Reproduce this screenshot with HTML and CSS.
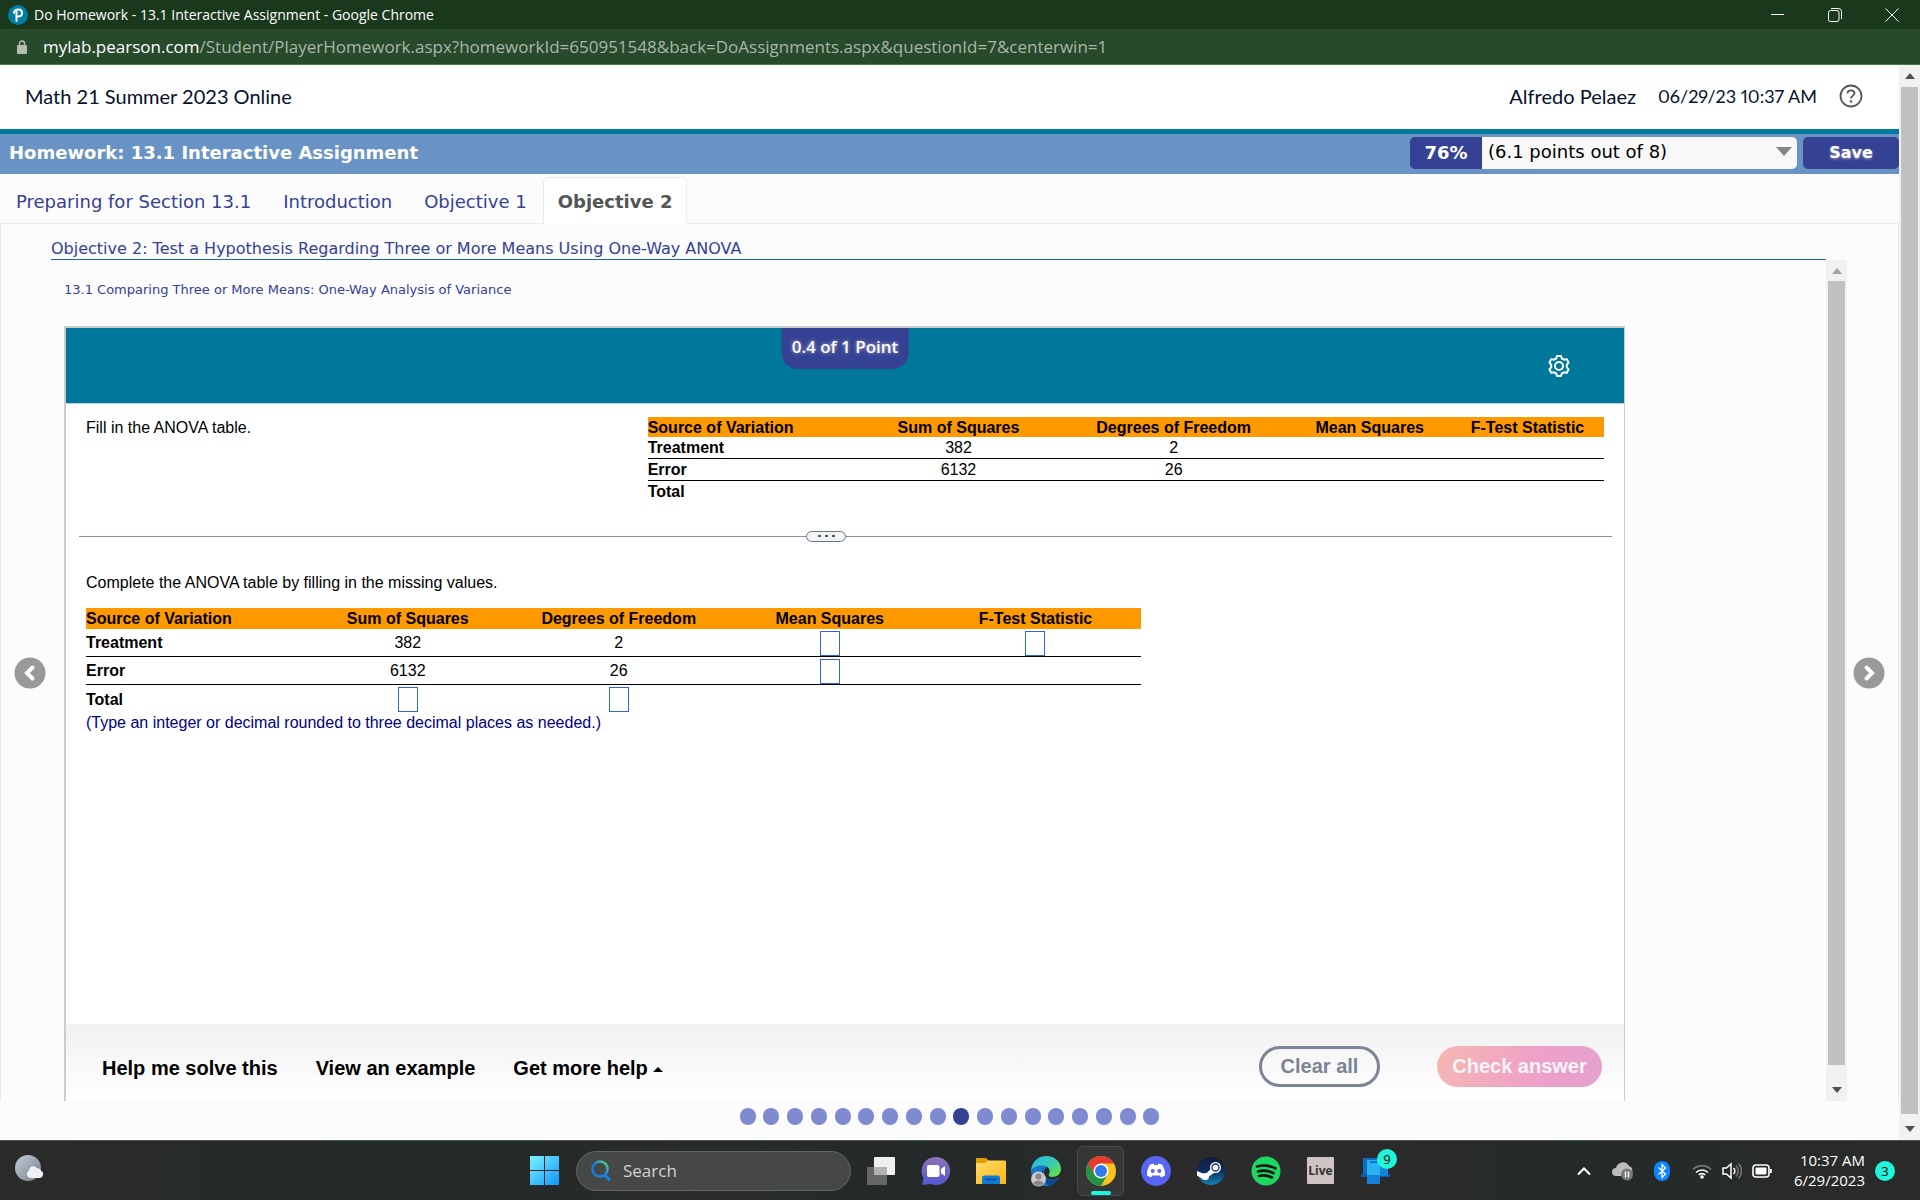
FILE: index.html
```html
<!DOCTYPE html>
<html lang="en">
  <head>
    <meta charset="UTF-8" />
    <title>Do Homework - 13.1 Interactive Assignment</title>
    <link rel="stylesheet" href="styles.css">
  </head>
  <body>
    <!-- window chrome -->
    <div class="titlebar">
      <svg class="favicon" width="20" height="20" viewBox="0 0 20 20">
        <circle cx="10" cy="10" r="10" fill="#007fa3" />
        <path d="M8.500 16V5.500M6 8c0-2.500 2-3.500 4.500-3.500S14 6 14 8s-1.500 3.500-4 3.500" fill="none" stroke="#fff" stroke-width="2" stroke-linecap="round" />
      </svg>
      <span class="window-title">Do Homework - 13.1 Interactive Assignment - Google Chrome</span>
      <button class="window-button" aria-label="Minimize">
        <svg width="14" height="14" viewBox="0 0 14 14"><path d="M0 6.500h13" /></svg>
      </button>
      <button class="window-button" aria-label="Restore">
        <svg width="14" height="14" viewBox="0 0 14 14"><rect x="0.500" y="2.500" width="10.500" height="11" rx="2" /><path d="M3 .5h7.500a3 3 0 0 1 3 3V11" /></svg>
      </button>
      <button class="window-button" aria-label="Close">
        <svg width="14" height="14" viewBox="0 0 14 14"><path d="M.5.5l13 13M13.500.5l-13 13" /></svg>
      </button>
    </div>
    <div class="urlbar">
      <svg width="12" height="14" viewBox="0 0 12 14">
        <rect x="1" y="5" width="10" height="9" rx="1" fill="#b4bcb4" />
        <path d="M3.500 5.500V3.500a2.500 2.500 0 0 1 5 0v2" fill="none" stroke="#b4bcb4" stroke-width="1.500" />
      </svg>
      <span class="url"><span class="host">mylab.pearson.com</span>/Student/PlayerHomework.aspx?homeworkId=650951548&amp;back=DoAssignments.aspx&amp;questionId=7&amp;centerwin=1</span>
    </div>

    <div class="viewport">
      <div class="page">
        <header class="header">
          <div class="course">Math 21 Summer 2023 Online</div>
          <div class="user">Alfredo Pelaez</div>
          <div class="date">06/29/23 10:37 AM</div>
          <button class="help-button" aria-label="Help">
            <svg width="24" height="24" viewBox="0 0 24 24" fill="none" stroke="#555" stroke-width="1.800">
              <circle cx="12" cy="12" r="10.500" />
              <path d="M8.500 9.500C8.500 7.500 10 6.300 12 6.300s3.500 1.200 3.500 3c0 2.200-3.500 2.500-3.500 5.200" />
              <circle cx="12" cy="17.500" r="1.200" fill="#555" stroke="none" />
            </svg>
          </button>
        </header>

        <div class="homework-bar">
          <h1>Homework: 13.1 Interactive Assignment</h1>
          <div class="score">
            <span class="percent">76%</span>
            <select aria-label="Score">
              <option>(6.1 points out of 8)</option>
            </select>
            <svg class="caret" width="16" height="9" viewBox="0 0 16 9"><path d="M0 0h16L8 9z" fill="#858585" /></svg>
          </div>
          <button class="save-button">Save</button>
        </div>

        <nav class="tabs">
          <a href="#">Preparing for Section 13.1</a>
          <a href="#">Introduction</a>
          <a href="#">Objective 1</a>
          <a href="#" class="active">Objective 2</a>
        </nav>

        <main class="player">
          <div class="side prev">
            <button class="arrow" aria-label="Previous question">
              <svg width="32" height="32" viewBox="0 0 32 32"><circle cx="16" cy="16" r="15.500" fill="#999" /><path d="M18.500 10.500L13 16l5.500 5.500" /></svg>
            </button>
          </div>

          <div class="pane">
            <h2>Objective 2: Test a Hypothesis Regarding Three or More Means Using One-Way ANOVA</h2>
            <div class="pane-body">
              <div class="pane-content">
                <a class="section-link" href="#">13.1 Comparing Three or More Means: One-Way Analysis of Variance</a>

                <div class="card">
                  <div class="card-top">
                    <span class="points">0.4 of 1 Point</span>
                    <button class="gear" aria-label="Settings">
                      <svg width="24" height="24" viewBox="0 0 24 24" fill="none" stroke="#fff" stroke-width="2">
                        <path d="M10 2h4l.8 2.500 2.200 1.200 2.600-.6 2 3.500-1.800 2v2.800l1.800 2-2 3.500-2.600-.6-2.200 1.200L14 22h-4l-.8-2.500L7 18.300l-2.600.6-2-3.500 1.800-2v-2.800l-1.800-2 2-3.500 2.600.6 2.200-1.200z" stroke-linejoin="round" />
                        <circle cx="12" cy="12" r="4" />
                      </svg>
                    </button>
                  </div>

                  <section class="question">
                    <p>Fill in the ANOVA table.</p>
                    <table class="anova given">
                      <colgroup>
                        <col class="g1"><col class="g2"><col class="g3"><col class="g4"><col class="g5">
                      </colgroup>
                      <thead>
                        <tr><th>Source of Variation</th><th>Sum of Squares</th><th>Degrees of Freedom</th><th>Mean Squares</th><th>F-Test Statistic</th></tr>
                      </thead>
                      <tbody>
                        <tr><th>Treatment</th><td>382</td><td>2</td><td></td><td></td></tr>
                        <tr><th>Error</th><td>6132</td><td>26</td><td></td><td></td></tr>
                        <tr><th>Total</th><td></td><td></td><td></td><td></td></tr>
                      </tbody>
                    </table>
                  </section>

                  <div class="divider">
                    <button class="grip" aria-label="Resize"><i></i><i></i><i></i></button>
                  </div>

                  <section class="answer">
                    <p>Complete the ANOVA table by filling in the missing values.</p>
                    <table class="anova fill">
                      <colgroup>
                        <col class="f1"><col class="f2"><col class="f3"><col class="f4"><col class="f5">
                      </colgroup>
                      <thead>
                        <tr><th>Source of Variation</th><th>Sum of Squares</th><th>Degrees of Freedom</th><th>Mean Squares</th><th>F-Test Statistic</th></tr>
                      </thead>
                      <tbody>
                        <tr><th>Treatment</th><td>382</td><td>2</td><td><input type="text" aria-label="Treatment mean squares"></td><td><input type="text" aria-label="F-test statistic"></td></tr>
                        <tr><th>Error</th><td>6132</td><td>26</td><td><input type="text" aria-label="Error mean squares"></td><td></td></tr>
                        <tr><th>Total</th><td><input type="text" aria-label="Total sum of squares"></td><td><input type="text" aria-label="Total degrees of freedom"></td><td></td><td></td></tr>
                      </tbody>
                    </table>
                    <p class="hint">(Type an integer or decimal rounded to three decimal places as needed.)</p>
                  </section>

                  <footer class="card-footer">
                    <button class="text-button">Help me solve this</button>
                    <button class="text-button">View an example</button>
                    <button class="text-button">Get more help <svg width="10" height="5" viewBox="0 0 10 5"><path d="M0 5h10L5 0z" /></svg></button>
                    <button class="clear-button">Clear all</button>
                    <button class="check-button">Check answer</button>
                  </footer>
                </div>
              </div>

              <div class="scrollbar inner">
                <svg width="10" height="6" viewBox="0 0 10 6"><path d="M0 6h10L5 0z" fill="#a3a3a3" /></svg>
                <span class="thumb"></span>
                <svg width="10" height="6" viewBox="0 0 10 6"><path d="M0 0h10L5 6z" fill="#505050" /></svg>
              </div>
            </div>
          </div>

          <div class="side next">
            <button class="arrow" aria-label="Next question">
              <svg width="32" height="32" viewBox="0 0 32 32"><circle cx="16" cy="16" r="15.500" fill="#999" /><path d="M13.500 10.500L19 16l-5.500 5.500" /></svg>
            </button>
          </div>
        </main>

        <div class="dots">
          <i></i><i></i><i></i><i></i><i></i><i></i><i></i><i></i><i></i><i class="current"></i><i></i><i></i><i></i><i></i><i></i><i></i><i></i><i></i>
        </div>
      </div>

      <div class="scrollbar">
        <svg width="10" height="6" viewBox="0 0 10 6"><path d="M0 6h10L5 0z" fill="#505050" /></svg>
        <span class="thumb"></span>
        <svg width="10" height="6" viewBox="0 0 10 6"><path d="M0 0h10L5 6z" fill="#505050" /></svg>
      </div>
    </div>

    <!-- Windows taskbar -->
    <div class="taskbar">
      <div class="weather">
        <svg width="30" height="28" viewBox="0 0 30 28">
          <defs>
            <linearGradient id="moon" x1="0" y1="0" x2="1" y2="1"><stop offset="0" stop-color="#c3ccd6" /><stop offset="1" stop-color="#75808c" /></linearGradient>
          </defs>
          <circle cx="13" cy="14" r="13" fill="url(#moon)" />
          <path d="M15 24a4 4 0 0 1-1-7.500 4.500 4.500 0 0 1 8-2.500 4.500 4.500 0 0 1 4 2.500 4 4 0 0 1-1 7.500z" fill="#eef0f3" />
        </svg>
      </div>

      <div class="apps">
        <button class="app start" aria-label="Start">
          <svg width="30" height="30" viewBox="0 0 30 30">
            <defs><linearGradient id="win" gradientUnits="userSpaceOnUse" x1="0" y1="0" x2="30" y2="30"><stop offset="0" stop-color="#7df3ff" /><stop offset="1" stop-color="#0a93fb" /></linearGradient></defs>
            <path d="M0 0h14v14H0zM15 0h14v14H15zM0 15h14v14H0zM15 15h14v14H15z" fill="url(#win)" />
          </svg>
        </button>
        <label class="search">
          <svg width="20" height="22" viewBox="0 0 20 22" fill="none">
            <defs><linearGradient id="lens" x1="0" y1="1" x2="1" y2="0"><stop offset=".5" stop-color="#1480dc" /><stop offset="1" stop-color="#5de07c" /></linearGradient></defs>
            <circle cx="9" cy="9" r="7.500" stroke="url(#lens)" stroke-width="2.500" />
            <path d="M14 15l4 4.500" stroke="#1480dc" stroke-width="3.200" stroke-linecap="round" />
          </svg>
          <input type="text" placeholder="Search" aria-label="Search">
        </label>

        <button class="app" aria-label="Task view">
          <svg width="30" height="30" viewBox="0 0 30 30">
            <rect x="1" y="11" width="20" height="18" rx="1" fill="#666" />
            <rect x="8" y="1" width="21" height="18" rx="1" fill="#f0f0f0" />
            <path d="M8 11h13v8H8z" fill="#b3b3b3" />
          </svg>
        </button>
        <button class="app" aria-label="Chat">
          <svg width="30" height="30" viewBox="0 0 30 30">
            <defs><linearGradient id="chat" x1="0" y1="0" x2="0" y2="1"><stop offset="0" stop-color="#8a72b8" /><stop offset="1" stop-color="#5558cf" /></linearGradient></defs>
            <path d="M15 1a14 14 0 1 1-5 27l-9 1 1.500-7A14 14 0 0 1 15 1z" fill="url(#chat)" />
            <rect x="6" y="9" width="12.500" height="12" rx="2" fill="#fff" />
            <path d="M20 13l4-3v10l-4-3z" fill="#fff" />
          </svg>
        </button>
        <button class="app" aria-label="File Explorer">
          <svg width="32" height="30" viewBox="0 0 32 30">
            <defs><linearGradient id="folder" x1="0" y1="0" x2="1" y2="1"><stop offset="0" stop-color="#ffdb6b" /><stop offset="1" stop-color="#fbb713" /></linearGradient></defs>
            <path d="M1 3a1 1 0 0 1 1-1h9l3 3v5H1z" fill="#e29c06" />
            <path d="M1 7h9l3-2.500h17a1 1 0 0 1 1 1V28H1z" fill="url(#folder)" />
            <path d="M7 28v-6a2.500 2.500 0 0 1 2.500-2.500h13A2.500 2.500 0 0 1 25 22v6z" fill="#0f7bd3" />
            <path d="M10.500 23.500h11" stroke="#094a8c" stroke-width="1.500" />
          </svg>
        </button>
        <button class="app" aria-label="Edge">
          <svg width="32" height="32" viewBox="0 0 32 32">
            <defs><linearGradient id="edge" x1="0" y1="0" x2="1" y2="1"><stop offset="0" stop-color="#23b6e8" /><stop offset=".5" stop-color="#38cbb5" /><stop offset="1" stop-color="#6be332" /></linearGradient></defs>
            <path d="M1 15c2-8 12-8 16-3-4 2-4 8 0 11 4 2.500 9 1.500 12-.5C26 28 21 31 16 31A15 15 0 0 1 1 15z" fill="#1477cc" />
            <path d="M13 14c-3 5-1 13 6 16.500 4-1 8-4 10-8-3 2-8 3-12 .5-3-2.500-4-6-4-9z" fill="#0c4a92" />
            <path d="M1 15C2 7 8 1 16 1c9 0 15 6 15 13 0 5-4 8-9 8-3 0-4-1.500-3-3 2-3 0-8-6-8.500C8 10 3 12 1 15z" fill="url(#edge)" />
            <circle cx="8.500" cy="24" r="7.500" fill="#c9c9c9" />
            <circle cx="8.500" cy="21.500" r="3" fill="#8a8684" />
            <path d="M3.500 28.500c1-4 9-4 10 0-2.500 3-7.500 3-10 0z" fill="#8a8684" />
          </svg>
        </button>
        <button class="app running" aria-label="Google Chrome">
          <svg width="30" height="30" viewBox="0 0 30 30">
            <circle cx="15" cy="15" r="15" fill="#fcc31e" />
            <path d="M2 7.500A15 15 0 0 1 28 7.500H15L8.500 18.800z" fill="#e33b2e" />
            <path d="M2 7.500A15 15 0 0 0 15 30l6.500-11.200-6.500-3z" fill="#229342" />
            <path d="M2 7.500l6.500 11.300L15 7.500z" fill="#e33b2e" />
            <circle cx="15" cy="15" r="7.500" fill="#fff" /><circle cx="15" cy="15" r="6" fill="#2f7bea" />
          </svg>
        </button>
        <button class="app" aria-label="Discord">
          <svg width="30" height="30" viewBox="0 0 30 30">
            <circle cx="15" cy="15" r="15" fill="#5865f2" />
            <path d="M9 8.500l3.500-1 .8 1.500h3.400l.8-1.500 3.500 1c2.300 3.500 3.300 7 3 11L20 21.500l-1.200-2h-7.600l-1.200 2L6 19.500c-.3-4 .7-7.500 3-11z" fill="#fff" />
            <circle cx="11.700" cy="15" r="2" fill="#5865f2" /><circle cx="18.300" cy="15" r="2" fill="#5865f2" />
          </svg>
        </button>
        <button class="app" aria-label="Steam">
          <svg width="30" height="30" viewBox="0 0 30 30">
            <defs><linearGradient id="steam" x1="0" y1="0" x2="0" y2="1"><stop offset="0" stop-color="#131a3a" /><stop offset=".5" stop-color="#0c2d5c" /><stop offset="1" stop-color="#1583b7" /></linearGradient></defs>
            <circle cx="15" cy="15" r="14" fill="url(#steam)" />
            <path d="M1 15l8 3.300 6-5.300 5 2.500-8 5.500a4 4 0 0 1-7 1L1 19.500z" fill="#fff" />
            <circle cx="9.500" cy="20.500" r="3.500" fill="#fff" />
            <circle cx="19.500" cy="11.500" r="5.500" fill="#fff" /><circle cx="19.500" cy="11.500" r="3.500" fill="#fff" stroke="#14305c" stroke-width="1.300" />
          </svg>
        </button>
        <button class="app" aria-label="Spotify">
          <svg width="30" height="30" viewBox="0 0 30 30">
            <circle cx="15" cy="15" r="14.500" fill="#1ed760" />
            <path d="M6 10.500c6-1.800 13-1 18.500 2M7 15.500c5.500-1.500 11-.8 15.500 1.700M8 20c4.500-1.200 9-.6 13 1.500" fill="none" stroke="#10150f" stroke-width="2.600" stroke-linecap="round" />
          </svg>
        </button>
        <button class="app" aria-label="Ableton Live"><span class="live">Live</span></button>
        <button class="app" aria-label="Phone Link">
          <svg width="30" height="30" viewBox="0 0 30 30">
            <path d="M2 2h19v19H2z" fill="#0b6fc6" /><path d="M0 18h29v3H0z" fill="#1059a8" />
            <path d="M15 4h12v16H15z" fill="#1282d8" />
            <rect x="6" y="4" width="13" height="24" rx="1" fill="#27b3f1" /><path d="M6 19h13v9H6z" fill="#1480d8" />
            <path d="M9 6h7" stroke="#0c62ab" stroke-width="1.500" />
          </svg>
          <span class="badge app-badge">9</span>
        </button>
      </div>

      <div class="tray">
        <svg width="16" height="10" viewBox="0 0 16 10"><path d="M2 8.500l6-6 6 6" fill="none" stroke="#fff" stroke-width="2" /></svg>
        <svg class="cloud" width="22" height="20" viewBox="0 0 22 20">
          <path d="M4 15a4 4 0 0 1 0-8 7 7 0 0 1 13-2c3 1 4 4 3 7l-4 3z" fill="#bdbdbd" />
          <circle cx="15" cy="13.500" r="6" fill="#777" /><path d="M13.500 10.500v6M16.500 10.500v6" stroke="#fff" stroke-width="1.400" />
        </svg>
        <svg class="bluetooth" width="16" height="20" viewBox="0 0 16 20">
          <rect width="16" height="20" rx="8" fill="#0a84ff" /><path d="M4.500 6.500l7 6.500-3.500 3.500v-13L11.500 7l-7 6.500" fill="none" stroke="#fff" stroke-width="1.300" />
        </svg>
        <svg width="20" height="16" viewBox="0 0 20 16" fill="none" stroke-width="1.700">
          <path d="M1 6.500a12.500 12.500 0 0 1 18 0" stroke="#777" /><path d="M4 9.500a8.500 8.500 0 0 1 12 0M6.800 12a4.500 4.500 0 0 1 6.400 0" stroke="#fff" /><circle cx="10" cy="14" r="1.800" fill="#fff" />
        </svg>
        <svg width="20" height="18" viewBox="0 0 20 18" fill="none" stroke="#fff" stroke-width="1.500">
          <path d="M1 6h3.500L9 2v14l-4.500-4H1zM11.500 6a4 4 0 0 1 0 6" /><path d="M14 3.500a8 8 0 0 1 0 11M16.500 1.500a11 11 0 0 1 0 15" stroke="#777" />
        </svg>
        <svg width="20" height="14" viewBox="0 0 20 14">
          <rect x="1" y="1" width="16" height="12" rx="3" fill="none" stroke="#fff" stroke-width="1.600" /><rect x="3.500" y="3.500" width="11" height="7" rx="1" fill="#fff" /><path d="M18.800 5v4" stroke="#fff" stroke-width="2" />
        </svg>
        <div class="clock"><div>10:37 AM</div><div>6/29/2023</div></div>
        <span class="badge">3</span>
      </div>
    </div>
  </body>
</html>
```
FILE: styles.css
```css
* {
  box-sizing: border-box;
  margin: 0;
  padding: 0;
}

body {
  display: flex;
  flex-direction: column;
  height: 100vh;
  overflow: hidden;
  font-family: "Liberation Sans", Arial, sans-serif;
  font-size: 16px;
  color: #000;
  background: #fcfcfc;
}

button {
  border: none;
  background: none;
  font: inherit;
  cursor: pointer;
}

a {
  text-decoration: none;
}

svg {
  flex: none;
}

/* browser window */
.titlebar {
  display: flex;
  align-items: center;
  height: 29px;
  padding-left: 8px;
  background: #1a381b;
  color: #fff;
  font-family: "Open Sans", sans-serif;
  font-size: 14px;
}

.window-title {
  flex: 1;
  margin-left: 6px;
}

.window-button {
  display: flex;
  align-items: center;
  justify-content: center;
  width: 57px;
  height: 28px;
}

.window-button svg {
  fill: none;
  stroke: #fff;
}

.urlbar {
  display: flex;
  align-items: center;
  gap: 15px;
  height: 36px;
  padding: 0 16px;
  background: #264a2a;
  border-bottom: 1px solid #4a7a4e;
  font-family: "Open Sans", sans-serif;
  font-size: 17px;
  color: #a9b7aa;
}

.host {
  color: #fff;
}

.viewport {
  flex: 1;
  display: flex;
  min-height: 0;
}

.page {
  flex: 1;
  display: flex;
  flex-direction: column;
  min-width: 0;
}

.scrollbar {
  display: flex;
  flex-direction: column;
  align-items: center;
  gap: 8px;
  width: 21px;
  padding: 8px 0;
  background: #f1f1f1;
}

.scrollbar .thumb {
  flex: 1;
  width: 17px;
  margin-bottom: 4px;
  background: #c1c1c1;
}

.scrollbar.inner {
  gap: 7px;
}

.scrollbar.inner .thumb {
  margin-bottom: 15px;
}

/* course header */
.header {
  display: flex;
  align-items: center;
  height: 69px;
  padding: 0 36px 2px 25px;
  background: #fff;
  border-bottom: 5px solid #007a9c;
  font-family: "Lato", sans-serif;
  font-size: 20px;
  color: #05112a;
}

.course {
  flex: 1;
}

.date {
  margin: 0 22px;
  font-size: 18px;
  font-variant-numeric: proportional-nums;
}

.help-button {
  display: flex;
}

.homework-bar {
  display: flex;
  align-items: center;
  height: 40px;
  padding: 0 0 3px 9px;
  background: #6a93c5;
  font-family: "DejaVu Sans", Verdana, sans-serif;
}

.homework-bar h1 {
  flex: 1;
  font-size: 18px;
  color: #fff;
}

.score {
  position: relative;
  display: flex;
  width: 387px;
  height: 32px;
  margin-right: 6px;
  border-radius: 5px;
  overflow: hidden;
}

.percent {
  display: flex;
  align-items: center;
  justify-content: center;
  width: 72px;
  background: #354193;
  color: #fff;
  font-size: 18px;
  font-weight: bold;
}

.score select {
  flex: 1;
  appearance: none;
  border: none;
  padding: 0 0 2px 6px;
  background: #f8f8f8;
  color: #000;
  font-family: inherit;
  font-size: 18px;
}

.score .caret {
  position: absolute;
  right: 5px;
  top: 10px;
  pointer-events: none;
}

.save-button {
  width: 96px;
  height: 32px;
  background: #354193;
  border-radius: 5px;
  color: #fff;
  font-size: 16px;
  font-weight: bold;
  text-shadow: 0 1px 3px rgba(255, 255, 255, 0.5);
}

.tabs {
  display: flex;
  height: 50px;
  padding-top: 3px;
  border-bottom: 1px solid #ececec;
  font-family: "DejaVu Sans", Verdana, sans-serif;
  font-size: 18px;
}

.tabs a {
  display: flex;
  align-items: center;
  height: 48px;
  padding: 0 16px;
  color: #354193;
}

.tabs a.active {
  background: #fff;
  border: 1px solid #ececec;
  border-bottom: none;
  border-radius: 5px 5px 0 0;
  padding: 0 14px;
  color: #555;
  font-weight: bold;
}

/* question player */
.player {
  flex: 1;
  display: flex;
  min-height: 0;
  border: solid #ececec;
  border-width: 0 1px;
}

.side {
  display: flex;
  align-items: center;
  justify-content: center;
}

.prev {
  width: 50px;
  padding: 20px 0 0 8px;
}

.next {
  width: 51px;
  padding: 20px 8px 0 0;
}

.arrow {
  display: flex;
}

.arrow path {
  fill: none;
  stroke: #fff;
  stroke-width: 4;
  stroke-linecap: round;
}

.pane {
  flex: 1;
  display: flex;
  flex-direction: column;
  min-width: 0;
}

.pane h2 {
  height: 36px;
  margin-right: 21px;
  border-bottom: 1px solid #1c67ad;
  font-family: "DejaVu Sans", Verdana, sans-serif;
  font-size: 16px;
  font-weight: normal;
  line-height: 50px;
  color: #354193;
}

.pane-body {
  flex: 1;
  display: flex;
  min-height: 0;
}

.pane-content {
  flex: 1;
  display: flex;
  flex-direction: column;
  padding: 20px 201px 0 13px;
}

.section-link {
  height: 46px;
  font-family: "DejaVu Sans", Verdana, sans-serif;
  font-size: 13px;
  line-height: 20px;
  color: #354193;
}

.card {
  flex: 1;
  display: flex;
  flex-direction: column;
  background: #fff;
  border: solid #ccc;
  border-width: 2px 1px 0 2px;
}

.card-top {
  position: relative;
  display: flex;
  align-items: center;
  justify-content: flex-end;
  height: 76px;
  padding-right: 53px;
  background: #00789b;
  border-bottom: 1px solid #b9d4e4;
}

.points {
  position: absolute;
  top: 0;
  left: 50%;
  transform: translateX(-50%);
  height: 41px;
  padding: 0 10px;
  border-radius: 0 0 16px 16px;
  background: #354193;
  color: #fff;
  font-family: "Open Sans", sans-serif;
  font-size: 17px;
  font-weight: 600;
  line-height: 38px;
  white-space: nowrap;
  text-shadow: 0 0 4px rgba(255, 255, 255, 0.6);
}

.gear {
  display: flex;
}

.question {
  display: flex;
  justify-content: space-between;
  padding: 13px 20px 28px;
}

.question p {
  padding-top: 1px;
  line-height: 20px;
}

.anova {
  table-layout: fixed;
  border-spacing: 0;
}

.anova th,
.anova td {
  padding-top: 1px;
  text-align: center;
  line-height: 20px;
}

.anova th:first-child {
  text-align: left;
}

.anova thead th {
  background: #ff9900;
}

.anova tbody tr:not(:last-child) > * {
  border-bottom: 1px solid #000;
}

.given {
  width: 63%;
}

.given thead th {
  line-height: 19px;
}

.g1 { width: 22%; }
.g2 { width: 21%; }
.g3 { width: 24%; }
.g4 { width: 17%; }
.g5 { width: 16%; }

.divider {
  display: flex;
  align-items: center;
  height: 12px;
  margin: 0 12px 0 13px;
}

.divider::before,
.divider::after {
  content: "";
  height: 1px;
  background: #8890a8;
}

.divider::before {
  flex: 95;
}

.divider::after {
  flex: 100;
}

.grip {
  display: flex;
  align-items: center;
  justify-content: center;
  gap: 4px;
  width: 40px;
  height: 11px;
  border: 1px solid #6a7684;
  border-radius: 6px;
  background: #f3f5f7;
}

.grip i {
  width: 3px;
  height: 2px;
  background: #555;
}

.answer {
  flex: 1;
  padding: 31px 20px 0;
}

.answer p {
  line-height: 20px;
}

.fill {
  width: 69.5%;
  margin-top: 15px;
}

.f1 { width: 21%; }
.f2 { width: 19%; }
.f3 { width: 21%; }
.f4 { width: 19%; }
.f5 { width: 20%; }

.fill tbody th,
.fill tbody td {
  height: 28px;
}

.fill input {
  display: block;
  width: 20px;
  height: 25px;
  margin: 0 auto;
  border: 1px solid #3366cc;
  background: #fff;
}

.answer .hint {
  color: #000080;
}

.card-footer {
  display: flex;
  align-items: center;
  height: 77px;
  padding: 8px 22px 0 36px;
  background: linear-gradient(#f1f1f1, #fff);
  font-size: 20px;
  font-weight: bold;
}

.text-button {
  margin-right: 38px;
  padding-top: 3px;
}

.text-button svg {
  vertical-align: middle;
}

.clear-button {
  width: 121px;
  height: 41px;
  margin: 0 57px 0 auto;
  border: 3px solid #7d8497;
  border-radius: 21px;
  color: #7d8497;
}

.check-button {
  width: 165px;
  height: 41px;
  border-radius: 21px;
  background: linear-gradient(110deg, #f5b8b2, #efa0c8 60%, #e3a2cf);
  color: #fbf4f8;
}

.dots {
  display: flex;
  justify-content: space-between;
  align-self: center;
  width: 420px;
  margin: 7px 0 15px;
}

.dots i {
  width: 16px;
  height: 17px;
  border-radius: 8px;
  background: #808ad0;
}

.dots .current {
  background: #354193;
}

/* taskbar */
.taskbar {
  display: grid;
  grid-template-columns: 1fr auto 1fr;
  align-items: center;
  height: 60px;
  padding-right: 25px;
  border-top: 1px solid #4b4f4f;
  background: linear-gradient(90deg, #2b2b2b, #242a29 18%, #242a29 28%, #2a2b2b 35%, #242a29 48%, #2b2b2b 60%, #2b2b2b 72%, #242a29 82%, #2b2b2b);
  font-family: "Open Sans", sans-serif;
  color: #fff;
}

.weather {
  padding-left: 15px;
}

.apps {
  display: flex;
  align-items: center;
  margin-left: 30px;
}

.app {
  position: relative;
  display: flex;
  align-items: center;
  justify-content: center;
  width: 55px;
  height: 50px;
}

.app.start {
  width: 46px;
}

.app.running::before {
  content: "";
  position: absolute;
  inset: 0 4px;
  border: 1px solid #484a4a;
  border-radius: 6px;
  background: rgba(255, 255, 255, 0.06);
}

.app.running::after {
  content: "";
  position: absolute;
  bottom: 1px;
  width: 20px;
  height: 4px;
  border-radius: 2px;
  background: #1ff5dc;
}

.app svg {
  position: relative;
}

.search {
  display: flex;
  align-items: center;
  gap: 12px;
  width: 275px;
  height: 40px;
  margin: 0 2px 0 8px;
  padding: 0 14px;
  border: 1px solid #626565;
  border-radius: 20px;
  background: #464848;
}

.search input {
  flex: 1;
  min-width: 0;
  border: none;
  background: none;
  color: #fff;
  font-family: inherit;
  font-size: 17px;
}

.search input::placeholder {
  color: #d2d2d2;
}

.live {
  width: 27px;
  height: 27px;
  border-radius: 1px;
  background: #cfc4c2;
  color: #333;
  font-size: 12px;
  font-weight: bold;
  line-height: 27px;
}

.badge {
  width: 20px;
  height: 20px;
  border-radius: 10px;
  background: #1ff5dc;
  color: #000;
  font-size: 13px;
  line-height: 20px;
  text-align: center;
}

.app-badge {
  position: absolute;
  top: 3px;
  right: 6px;
}

.tray {
  display: flex;
  align-items: center;
  justify-content: flex-end;
  gap: 10px;
}

.cloud {
  margin-left: 10px;
}

.bluetooth {
  margin: 0 12px 0 10px;
}

.clock {
  margin-left: 12px;
  padding-bottom: 2px;
  font-size: 15px;
  line-height: 20px;
  text-align: right;
}
```
